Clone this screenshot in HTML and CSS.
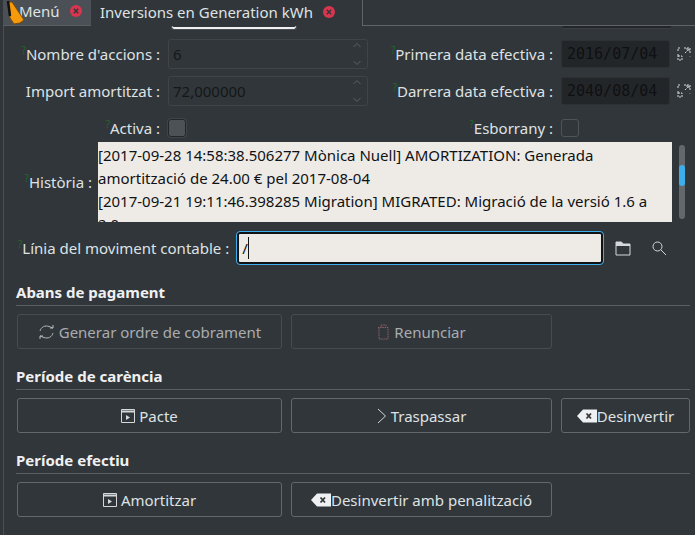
FILE: index.html
```html
<!DOCTYPE html>
<html lang="en">
<head>
    <meta charset="UTF-8">
    <meta name="viewport" content="width=device-width, initial-scale=1.0">
    <title>Inversions en Generation kWh</title>
    <link rel="stylesheet" href="styles.css">
</head>
<body>
    <svg class="cursor" width="26" height="30" viewBox="0 0 26 30">
        <path d="M8 2 L12 2 L24 20 L20 23 L14 24 L10 18 Z" fill="#f59a0c" stroke="#7a4a05" stroke-width="1"/>
        <path d="M8 1 L10 16" stroke="#111" stroke-width="2.5" fill="none"/>
    </svg>

    <div class="tabs">
        <div class="tab tab-off">
            <span class="tab-label tab-menu">Menú</span>
            <svg class="close" width="12" height="12" viewBox="0 0 12 12"><circle cx="6" cy="6" r="6" fill="#d8354f"/><path d="M3.8 3.8 L8.2 8.2 M8.2 3.8 L3.8 8.2" stroke="#31363b" stroke-width="1.4"/></svg>
        </div>
        <div class="tab tab-on">
            <span class="tab-label">Inversions en Generation kWh</span>
            <svg class="close" width="12" height="12" viewBox="0 0 12 12"><circle cx="6" cy="6" r="6" fill="#d8354f"/><path d="M3.8 3.8 L8.2 8.2 M8.2 3.8 L3.8 8.2" stroke="#31363b" stroke-width="1.4"/></svg>
        </div>
        <div class="tab-rest"></div>
    </div>

    <div class="page">
        <div class="clipped">
            <div class="clip-a"></div>
            <div class="clip-b"></div>
        </div>

        <div class="form-top">
            <label class="lbl"><sup>?</sup>Nombre d'accions :</label>
            <div class="spin">
                <span>6</span>
                <svg width="10" height="28" viewBox="0 0 10 28"><path d="M1.5 7 L5 3.5 L8.5 7 M1.5 21 L5 24.5 L8.5 21" fill="none" stroke="#5c6166"/></svg>
            </div>
            <label class="lbl"><sup>?</sup>Primera data efectiva :</label>
            <div class="date">2016/07/04</div>
            <svg class="cal" width="14" height="14" viewBox="0 0 14 14"><path d="M1 4 V1 H4 M7 1 H13 V7 M1 7 V9 M13 9 V9.5 M1 9 H5 V13 H1 Z M8 6 L12 2 M9 2 H12 V5" fill="none" stroke="#d5d8da" stroke-dasharray="2 1"/></svg>

            <label class="lbl">Import amortitzat :</label>
            <div class="spin">
                <span>72,000000</span>
                <svg width="10" height="28" viewBox="0 0 10 28"><path d="M1.5 7 L5 3.5 L8.5 7 M1.5 21 L5 24.5 L8.5 21" fill="none" stroke="#5c6166"/></svg>
            </div>
            <label class="lbl"><sup>?</sup>Darrera data efectiva :</label>
            <div class="date">2040/08/04</div>
            <svg class="cal" width="14" height="14" viewBox="0 0 14 14"><path d="M1 4 V1 H4 M7 1 H13 V7 M1 7 V9 M13 9 V9.5 M1 9 H5 V13 H1 Z M8 6 L12 2 M9 2 H12 V5" fill="none" stroke="#d5d8da" stroke-dasharray="2 1"/></svg>

            <label class="lbl"><sup>?</sup>Activa :</label>
            <div class="check-cell"><span class="check check-off"></span></div>
            <label class="lbl"><sup>?</sup>Esborrany :</label>
            <div class="check-cell"><span class="check"></span></div>
            <span></span>
        </div>

        <div class="history-row">
            <label class="lbl lbl-history"><sup>?</sup>Història :</label>
            <div class="history">[2017-09-28 14:58:38.506277 Mònica Nuell] AMORTIZATION: Generada amortització de 24.00 € pel 2017-08-04<br>[2017-09-21 19:11:46.398285 Migration] MIGRATED: Migració de la versió 1.6 a 2.0</div>
            <div class="scroll"><div class="thumb"></div></div>
        </div>

        <div class="move-row">
            <label class="lbl"><sup>?</sup>Línia del moviment contable :</label>
            <div class="move-input"><span>/</span><i class="caret"></i></div>
            <svg class="move-icon" width="16" height="16" viewBox="0 0 16 16"><path d="M1 15 V2 H6.5 L8 4 H15 V15 Z" fill="none" stroke="#d5d8da"/><path d="M1 2 H6.5 L8 4 H15 V6 H1 Z" fill="#d5d8da"/></svg>
            <svg class="move-icon" width="16" height="16" viewBox="0 0 16 16"><circle cx="6.5" cy="6.5" r="4.5" fill="none" stroke="#d5d8da"/><path d="M10 10 L15 15" stroke="#d5d8da"/></svg>
        </div>

        <h2 class="group">Abans de pagament</h2>
        <div class="btn-row">
            <button class="btn off b1">
                <svg width="17" height="16" viewBox="0 0 17 16"><path d="M2 7 C3 3 7 1 11 2.500 L15 4 M15 1 V4 H12 M15 9 C14 13 10 15 6 13.500 L2 12 M2 15 V12 H5" fill="none" stroke="#b4b8ba"/></svg>
                Generar ordre de cobrament
            </button>
            <button class="btn off b2">
                <svg width="13" height="16" viewBox="0 0 13 16"><path d="M2 4 V15 H11 V4 M1 3.500 H12 M4 3 V1 H9 V3" fill="none" stroke="#8b5f68" stroke-dasharray="1.500 0.700"/></svg>
                Renunciar
            </button>
        </div>

        <h2 class="group">Període de carència</h2>
        <div class="btn-row">
            <button class="btn b1">
                <svg width="14" height="14" viewBox="0 0 14 14"><path d="M0.500 0.500 H13.500 V13.500 H0.500 Z" fill="none" stroke="#d5d8da"/><path d="M0.500 2.500 H13.500" stroke="#d5d8da" stroke-width="2"/><path d="M5 6 L9 8.500 L5 11 Z" fill="#d5d8da"/></svg>
                Pacte
            </button>
            <button class="btn b2">
                <svg width="10" height="16" viewBox="0 0 10 16"><path d="M1 1 L8.500 8 L1 15" fill="none" stroke="#d5d8da"/></svg>
                Traspassar
            </button>
            <button class="btn b3">
                <svg class="del" width="20" height="14" viewBox="0 0 20 14"><path d="M0 7 L6 0.500 H20 V13.500 H6 Z" fill="#eff0f1"/><path d="M9.500 4.500 L14 9.500 M14 4.500 L9.500 9.500" stroke="#31363b" stroke-width="1.800"/></svg>Desinvertir
            </button>
        </div>

        <h2 class="group">Període efectiu</h2>
        <div class="btn-row">
            <button class="btn b1">
                <svg width="14" height="14" viewBox="0 0 14 14"><path d="M0.500 0.500 H13.500 V13.500 H0.500 Z" fill="none" stroke="#d5d8da"/><path d="M0.500 2.500 H13.500" stroke="#d5d8da" stroke-width="2"/><path d="M5 6 L9 8.500 L5 11 Z" fill="#d5d8da"/></svg>
                Amortitzar
            </button>
            <button class="btn b2">
                <svg class="del" width="20" height="14" viewBox="0 0 20 14"><path d="M0 7 L6 0.500 H20 V13.500 H6 Z" fill="#eff0f1"/><path d="M9.500 4.500 L14 9.500 M14 4.500 L9.500 9.500" stroke="#31363b" stroke-width="1.800"/></svg>Desinvertir amb penalització
            </button>
        </div>
    </div>
</body>
</html>
```

FILE: styles.css
```css
* {
    box-sizing: border-box;
}

html, body {
    margin: 0;
    height: 535px;
    overflow: hidden;
}

body {
    position: relative;
    background-color: #31363b;
    color: #dfe2e4;
    font-family: "Noto Sans", sans-serif;
    font-size: 15px;
    line-height: 20px;
}

.cursor {
    position: absolute;
    top: 0;
    left: 0;
    z-index: 2;
}

/* tab bar */
.tabs {
    display: flex;
    height: 26px;
    padding-left: 3px;
}

.tab {
    display: flex;
    align-items: center;
    height: 26px;
    padding-bottom: 3px;
}

.tab-off {
    width: 88px;
    background-color: #4a5056;
    border-bottom: 1px solid #5a5f64;
}

.tab-on {
    width: 272px;
    padding-left: 9px;
    border-right: 1px solid #5f6469;
}

.tab-label {
    font-size: 15px;
}

.tab-menu {
    margin-left: 16px;
}

.tab-off .close {
    margin-left: 10px;
}

.tab-on .close {
    margin-left: 10px;
}

.tab-rest {
    flex: 1;
    border-bottom: 1px solid #5f6469;
}

/* everything under the tabs */
.page {
    height: 509px;
    margin-left: 3px;
    padding-left: 12px;
    border-left: 1px solid #4a4f54;
}

.clipped {
    height: 4px;
    position: relative;
    display: flex;
}

.clip-a {
    width: 126px;
    height: 4px;
    margin-left: 155px;
    border: 1px solid #4a4f54;
    border-top: 0;
    border-radius: 0 0 3px 3px;
    box-shadow: inset 0 -2px 0 #eff0f1;
}

.clip-b {
    width: 108px;
    height: 3px;
    margin-left: 266px;
    background-color: #232629;
    border-bottom: 1px solid #3b4045;
}

.form-top {
    display: grid;
    grid-template-columns: 144px 200px 177px 109px 16px;
    grid-auto-rows: 31px;
    row-gap: 6px;
    column-gap: 8px;
    align-items: center;
    margin-top: 8px;
    height: 103px;
    margin-left: 0;
}

.form-top > :nth-child(5n+3) {
    margin-left: -2px;
}

.lbl {
    white-space: nowrap;
    text-align: right;
    color: #dfe2e4;
}

.lbl sup {
    color: #1d6b23;
    font-size: 10px;
    line-height: 0;
    vertical-align: 6px;
}

.spin {
    display: flex;
    justify-content: space-between;
    align-items: center;
    height: 30px;
    padding: 0 5px 0 4px;
    border: 1px solid #3f4449;
    border-radius: 3px;
    color: #141618;
}

.date {
    height: 28px;
    padding-left: 5px;
    background-color: #232629;
    border: 1px solid #2d3135;
    border-radius: 3px;
    color: #0f1012;
    font-family: "DejaVu Sans Mono", monospace;
    font-size: 15px;
    line-height: 26px;
}

.cal {
    margin-left: -1px;
}

.check-cell {
    display: flex;
    height: 18px;
}

.check {
    width: 18px;
    height: 18px;
    border: 1px solid #4f5459;
    border-radius: 3px;
}

.check-off {
    background-color: #4d5257;
    border-color: #232629;
    box-shadow: 0 0 0 1px #3f4449;
}

/* historia text box */
.history-row {
    display: flex;
    align-items: center;
    height: 80px;
    margin-top: 1px;
}

.lbl-history {
    width: 74px;
    margin-left: 2px;
}

.history {
    width: 574px;
    height: 80px;
    margin-left: 6px;
    padding: 2px 0 0 0;
    overflow: hidden;
    background-color: #eeebe7;
    color: #101214;
    font-size: 15px;
    line-height: 23px;
}

.scroll {
    position: relative;
    width: 6px;
    height: 74px;
    margin-left: 7px;
    border-radius: 3px;
    background-color: #63686c;
}

.thumb {
    position: absolute;
    top: 20px;
    width: 6px;
    height: 21px;
    border-radius: 3px;
    background-color: #3daee9;
}

.move-row {
    display: flex;
    align-items: center;
    height: 32px;
    margin-top: 10px;
}

.move-row .lbl {
    margin-left: 2px;
}

.move-input {
    display: flex;
    align-items: center;
    width: 366px;
    height: 32px;
    margin-left: 8px;
    padding-left: 3px;
    background-color: #eeebe7;
    border: 2px solid #101214;
    outline: 1px solid #3daee9;
    outline-offset: 0;
    border-radius: 3px;
    color: #101214;
}

.caret {
    width: 1px;
    height: 22px;
    background-color: #101214;
}

.move-icon {
    margin-left: 12px;
}

.move-icon + .move-icon {
    margin-left: 20px;
}

/* button groups */
.group {
    height: 24px;
    margin: 18px 5px 0 0;
    border-bottom: 1px solid #5a5f64;
    color: #eff0f1;
    font-size: 15px;
    font-weight: 700;
    line-height: 20px;
}

.btn-row {
    display: flex;
    gap: 9px;
    margin-top: 8px;
    margin-left: 1px;
}

.group + .btn-row + .group {
    margin-top: 17px;
}

.btn {
    display: flex;
    align-items: center;
    justify-content: center;
    gap: 4px;
    height: 35px;
    padding: 0;
    background-color: transparent;
    border: 1px solid #63686c;
    border-radius: 3px;
    color: #dfe2e4;
    font-family: inherit;
    font-size: 15px;
}

.btn.off {
    border-color: #474c51;
    color: #a9adb0;
}

.b1 {
    width: 265px;
}

.b2 {
    width: 261px;
}

.b3 {
    width: 129px;
}

.del {
    margin-right: -4px;
}
```
